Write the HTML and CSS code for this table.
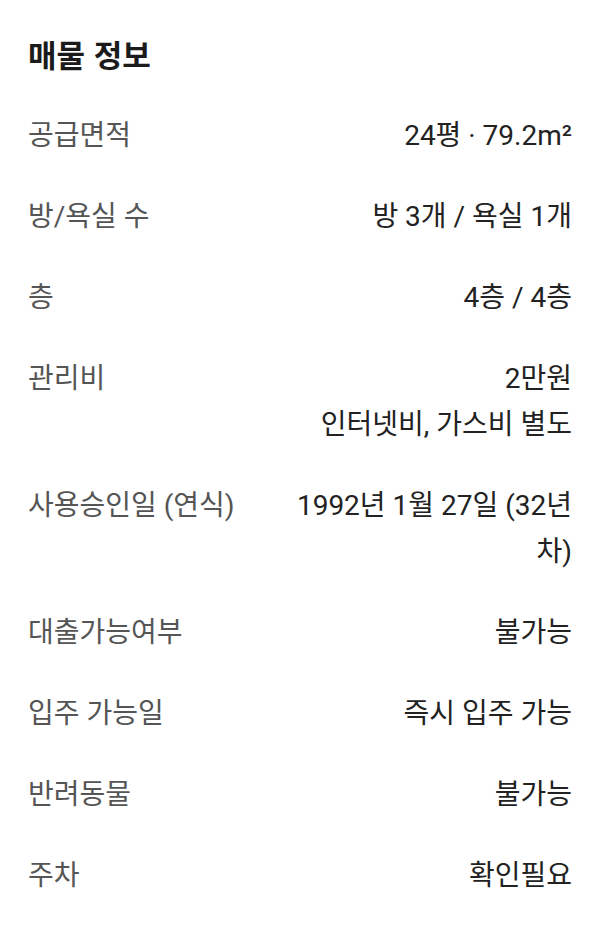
FILE: index.html
```html
<!DOCTYPE html>
<html lang="ko">
<head>
<meta charset="utf-8">
<link rel="stylesheet" href="styles.css">
</head>
<body>
<section class="info">
  <h2 class="title">매물 정보</h2>
  <dl class="rows">
    <div class="row"><dt class="label">공급면적</dt><dd class="value">24평 · 79.2m²</dd></div>
    <div class="row"><dt class="label">방/욕실 수</dt><dd class="value">방 3개 / 욕실 1개</dd></div>
    <div class="row"><dt class="label">층</dt><dd class="value">4층 / 4층</dd></div>
    <div class="row"><dt class="label">관리비</dt><dd class="value">2만원<br>인터넷비, 가스비 별도</dd></div>
    <div class="row"><dt class="label">사용승인일 (연식)</dt><dd class="value">1992년 1월 27일 (32년 차)</dd></div>
    <div class="row"><dt class="label">대출가능여부</dt><dd class="value">불가능</dd></div>
    <div class="row"><dt class="label">입주 가능일</dt><dd class="value">즉시 입주 가능</dd></div>
    <div class="row"><dt class="label">반려동물</dt><dd class="value">불가능</dd></div>
    <div class="row"><dt class="label">주차</dt><dd class="value">확인필요</dd></div>
  </dl>
</section>
</body>
</html>
```
FILE: styles.css
```css
html, body {
  margin: 0;
  padding: 0;
  background: #ffffff;
}
body {
  font-family: Roboto, "Noto Sans CJK KR", sans-serif;
  -webkit-font-smoothing: antialiased;
}
.info {
  padding: 30px 28px 0 28px;
}
.title {
  margin: 0 0 35px 0;
  font-size: 31px;
  line-height: 48px;
  font-weight: 700;
  color: #1b1b1b;
  font-family: "Noto Sans CJK KR", sans-serif;
}
.rows {
  margin: 0;
  padding: 0;
}
.row {
  display: flex;
  justify-content: space-between;
  align-items: flex-start;
  padding: 0 0 35px 0;
  font-size: 28px;
  line-height: 46px;
}
.label {
  margin: 0;
  flex-shrink: 0;
  color: #555555;
}
.value {
  margin: 0 0 0 50px;
  flex: 1;
  text-align: right;
  color: #222222;
}
```
